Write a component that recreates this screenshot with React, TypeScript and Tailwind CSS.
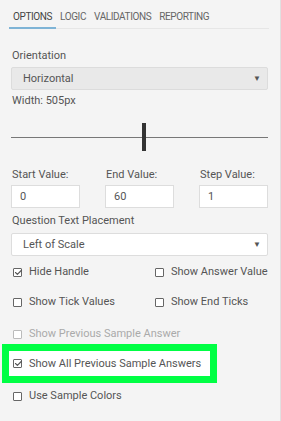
import { Check } from 'lucide-react';

function Box({ checked, dim }: { checked?: boolean; dim?: boolean }) {
    return (
        <span
            className={`relative inline-block w-[9px] h-[9px] border rounded-[1px] bg-white shrink-0 ${
                dim ? 'border-[#bbb]' : 'border-[#666]'
            }`}
        >
            {checked && (
                <Check size={9} strokeWidth={3} className="absolute -top-[1px] left-[0px] text-[#555]" />
            )}
        </span>
    );
}

function Option({ label, checked, dim }: { label: string; checked?: boolean; dim?: boolean }) {
    return (
        <label
            className={`flex items-center gap-[7px] whitespace-nowrap leading-[14px] ${
                dim ? 'text-[#aaa]' : 'text-[#555]'
            }`}
        >
            <Box checked={checked} dim={dim} />
            <span>{label}</span>
        </label>
    );
}

export default function App() {
    const tabs = ['OPTIONS', 'LOGIC', 'VALIDATIONS', 'REPORTING'];

    return (
        <div
            className="w-[281px] h-[421px] overflow-hidden bg-[#f4f4f4] border-r border-[#e0e0e0] text-[11px] leading-[14px] text-[#555]"
            style={{ fontFamily: 'Roboto, sans-serif' }}
        >
            <div className="pl-[9px] pr-[11px] pt-[9px]">
                <div className="flex border-b border-[#e6e6e6] text-[10px] leading-[15px] text-[#666]">
                    {tabs.map((t, i) => (
                        <div
                            key={t}
                            className={`px-[4px] pb-[3px] tracking-[-0.4px] ${
                                i === 0 ? 'border-b-2 border-[#7fb4d6] -mb-[1px] text-[#444]' : ''
                            }`}
                        >
                            {t}
                        </div>
                    ))}
                </div>
            </div>

            <div className="pl-[11px] pr-[12px]">
                <div className="mt-[20px] ml-[1px]">Orientation</div>
                <div className="mt-[4px] h-[23px] flex items-center justify-between bg-[#e9e9e9] border border-[#dcdcdc] rounded-[2px] pl-[11px] pr-[6px]">
                    <span>Horizontal</span>
                    <span className="text-[8px] text-[#555]">▼</span>
                </div>
                <div className="mt-[4px] ml-[1px]">Width: 505px</div>

                <div className="relative h-[30px] mt-[14px] flex items-center">
                    <div className="w-full h-[1px] bg-[#777]"></div>
                    <div className="absolute left-[131px] top-[1px] w-[4px] h-[28px] bg-[#333]"></div>
                </div>

                <div className="mt-[16px] grid grid-cols-3 gap-x-[25px]">
                    {[
                        ['Start Value:', '0'],
                        ['End Value:', '60'],
                        ['Step Value:', '1'],
                    ].map(([l, v]) => (
                        <div key={l}>
                            <div className="ml-[1px]">{l}</div>
                            <div className="mt-[3px] h-[23px] w-[69px] bg-white border border-[#ddd] flex items-center pl-[8px]">
                                {v}
                            </div>
                        </div>
                    ))}
                </div>

                <div className="mt-[6px] ml-[1px]">Question Text Placement</div>
                <div className="mt-[5px] h-[23px] flex items-center justify-between bg-white border border-[#ddd] rounded-[2px] pl-[11px] pr-[6px]">
                    <span>Left of Scale</span>
                    <span className="text-[8px] text-[#555]">▼</span>
                </div>

                <div className="mt-[9px] pl-[2px] grid grid-cols-[142px_1fr] gap-y-[16px]">
                    <Option label="Hide Handle" checked />
                    <Option label="Show Answer Value" />
                    <Option label="Show Tick Values" />
                    <Option label="Show End Ticks" />
                </div>

                <div className="mt-[18px] pl-[2px]">
                    <Option label="Show Previous Sample Answer" dim />
                </div>
            </div>

            <div className="mt-[3px] ml-[2px] w-[215px] h-[39px] border-[7px] border-[#00ff44] bg-white flex items-center pl-[4px]">
                <Option label="Show All Previous Sample Answers" checked />
            </div>

            <div className="mt-[6px] pl-[13px]">
                <Option label="Use Sample Colors" />
            </div>
        </div>
    );
}
